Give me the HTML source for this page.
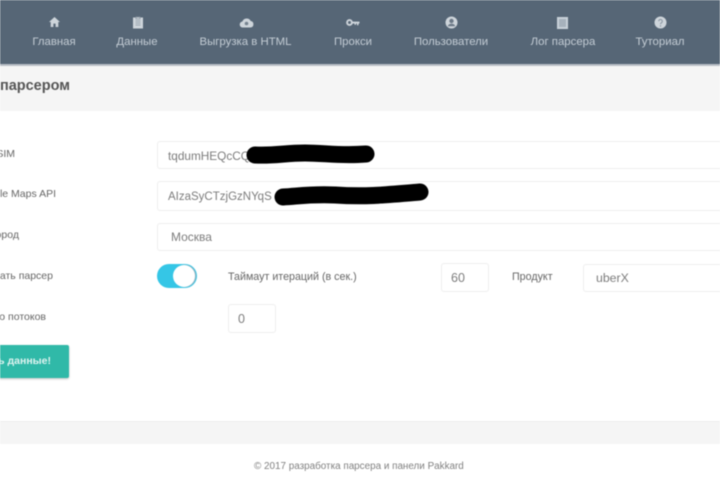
<!DOCTYPE html>
<html><head><meta charset="utf-8"><style>
html,body{margin:0;padding:0;width:720px;height:480px;overflow:hidden;background:#fff;font-family:"Liberation Sans","Noto Sans CJK SC",sans-serif}
#w{position:absolute;left:0;top:0;width:720px;height:480px;overflow:hidden;filter:blur(.6px)}
.a,.l,.r,.n,.f,.v{position:absolute;white-space:nowrap}
.n{top:35px;height:14px;line-height:14px;font-size:11.4px;color:#c3ccd4;transform:translateX(-50%)}
.l{font-size:10.7px;line-height:14px;color:#666}
.r{font-size:10.5px;line-height:14px;color:#666}
.f{background:#fff;border:1px solid #eeeeee;border-radius:3px;box-sizing:border-box}
.v{font-size:11.8px;line-height:14px;color:#7c7c7c}
svg.i{position:absolute}
</style></head><body><div id="w">
<div class="a" style="left:0;top:0;width:720px;height:64px;background:#566676"></div>
<div class="a" style="left:0;top:64px;width:720px;height:2px;background:#b9bfc6"></div>
<div class="a" style="left:0;top:66px;width:720px;height:45px;background:#f5f5f5"></div>

<svg class="i" style="left:48px;top:16px" width="13" height="12" viewBox="0 0 13 12"><path d="M6.5 1L1 6h1.7v5h2.700V7.600h2.200V11h2.700V6H12z" fill="#ced5db"/></svg>
<svg class="i" style="left:132px;top:16px" width="12" height="13" viewBox="0 0 12 13"><path d="M1 1.500h10v11H1z" fill="#ced5db"/><path d="M4 1h4v2H4zM3.500 5h5M3.500 7h5M3.500 9h5" stroke="#8b97a3" stroke-width=".8" fill="none"/></svg>
<svg class="i" style="left:239px;top:17px" width="15" height="11" viewBox="0 0 15 11"><path d="M4 10.500a3 3 0 0 1-.6-6A4.500 4.500 0 0 1 11.700 4a3.300 3.300 0 0 1 0 6.500z" fill="#ced5db"/><circle cx="7.500" cy="6.500" r="1.800" fill="#75828f"/></svg>
<svg class="i" style="left:346px;top:19px" width="14" height="8" viewBox="0 0 14 8"><circle cx="3.500" cy="3.500" r="2.400" fill="none" stroke="#ced5db" stroke-width="1.900"/><path d="M6 2.600h7.500v1.900h-1v1.800h-1.500V4.500h-1v1.200H8.500V4.500H6z" fill="#ced5db"/></svg>
<svg class="i" style="left:445px;top:16px" width="13" height="13" viewBox="0 0 13 13"><circle cx="6.500" cy="6.500" r="6" fill="#ced5db"/><circle cx="6.500" cy="5" r="2.200" fill="#6c7987"/><path d="M2.800 10.200c.6-2 2-2.500 3.700-2.500s3.100.5 3.700 2.500z" fill="#6c7987"/></svg>
<svg class="i" style="left:557px;top:17px" width="11" height="12" viewBox="0 0 11 12"><rect x="0" y="0" width="11" height="12" fill="#c8d1d9"/><rect x="2" y="2" width="7" height="8" fill="#a6b1bc"/></svg>
<svg class="i" style="left:654px;top:16px" width="13" height="13" viewBox="0 0 13 13"><circle cx="6.500" cy="6.500" r="6" fill="#ced5db"/><path d="M4.700 5.200a1.800 1.800 0 1 1 2.700 1.600c-.6.400-.9.700-.9 1.400" fill="none" stroke="#8b97a3" stroke-width="1.100"/><circle cx="6.500" cy="10" r=".7" fill="#8b97a3"/></svg>

<div class="n" style="left:54px">Главная</div>
<div class="n" style="left:137px">Данные</div>
<div class="n" style="left:245.500px">Выгрузка в HTML</div>
<div class="n" style="left:353px">Прокси</div>
<div class="n" style="left:451px">Пользователи</div>
<div class="n" style="left:563px">Лог парсера</div>
<div class="n" style="left:660px">Туториал</div>

<div class="a" style="right:650px;top:77px;font-size:14.500px;line-height:18px;font-weight:bold;color:#555">парсером</div>

<div class="r" style="right:705px;top:147px">SIM</div>
<div class="r" style="right:664px;top:187px">le Maps API</div>
<div class="r" style="right:701px;top:228px">ород</div>
<div class="r" style="right:667px;top:269px">ать парсер</div>
<div class="r" style="right:674px;top:310px">о потоков</div>

<div class="f" style="left:157px;top:141px;width:575px;height:28px"></div>
<div class="f" style="left:157px;top:181px;width:575px;height:30px"></div>
<div class="f" style="left:157px;top:223px;width:575px;height:28px"></div>
<div class="f" style="left:441px;top:263px;width:48px;height:29px"></div>
<div class="f" style="left:583px;top:264px;width:149px;height:28px"></div>
<div class="f" style="left:228px;top:304px;width:48px;height:29px"></div>

<div class="v" style="left:168px;top:149px">tqdumHEQcCQ</div>
<div class="v" style="left:168px;top:190px;font-size:11.500px">AIzaSyCTzjGzNYqS</div>
<div class="v" style="left:171px;top:230px;font-size:12px">Москва</div>
<div class="v" style="left:451px;top:271px;font-size:12.500px">60</div>
<div class="v" style="left:596px;top:271px;font-size:12.300px">uberX</div>
<div class="v" style="left:238px;top:312px;font-size:12.500px">0</div>

<svg class="i" style="left:240px;top:140px" width="200" height="72" viewBox="240 140 200 72"><path d="M255 155C275 156 285 153 305 153C325 153 340 156 366 154" fill="none" stroke="#000" stroke-width="17" stroke-linecap="round"/><path d="M283 197C300 196 310 194 335 195C365 197 385 195 420 192" fill="none" stroke="#000" stroke-width="17" stroke-linecap="round"/></svg>

<div class="a" style="left:157px;top:264px;width:40px;height:24px;border-radius:12px;background:#35c6e6"></div>
<div class="a" style="left:173px;top:265px;width:22px;height:22px;border-radius:50%;background:#fff;box-shadow:1px 0 1px #9fb0ba"></div>

<div class="l" style="left:228px;top:270px">Таймаут итераций (в сек.)</div>
<div class="l" style="left:512px;top:270px">Продукт</div>

<div class="a" style="left:-20px;top:345px;width:89px;height:33px;border-radius:2px;background:#30b9a8;box-shadow:0 1px 2px rgba(0,0,0,.25)"></div>
<div class="a" style="right:669px;top:354px;font-size:10.500px;line-height:14px;font-weight:bold;color:#dff3f0">ь данные!</div>

<div class="a" style="left:0;top:421px;width:720px;height:23px;background:#f5f5f5;border-top:1px solid #eeeeee;box-sizing:border-box"></div>
<div class="a" style="left:254px;top:460px;font-size:9.900px;line-height:13px;color:#808080">© 2017 разработка парсера и панели Pakkard</div>
</div></body></html>
